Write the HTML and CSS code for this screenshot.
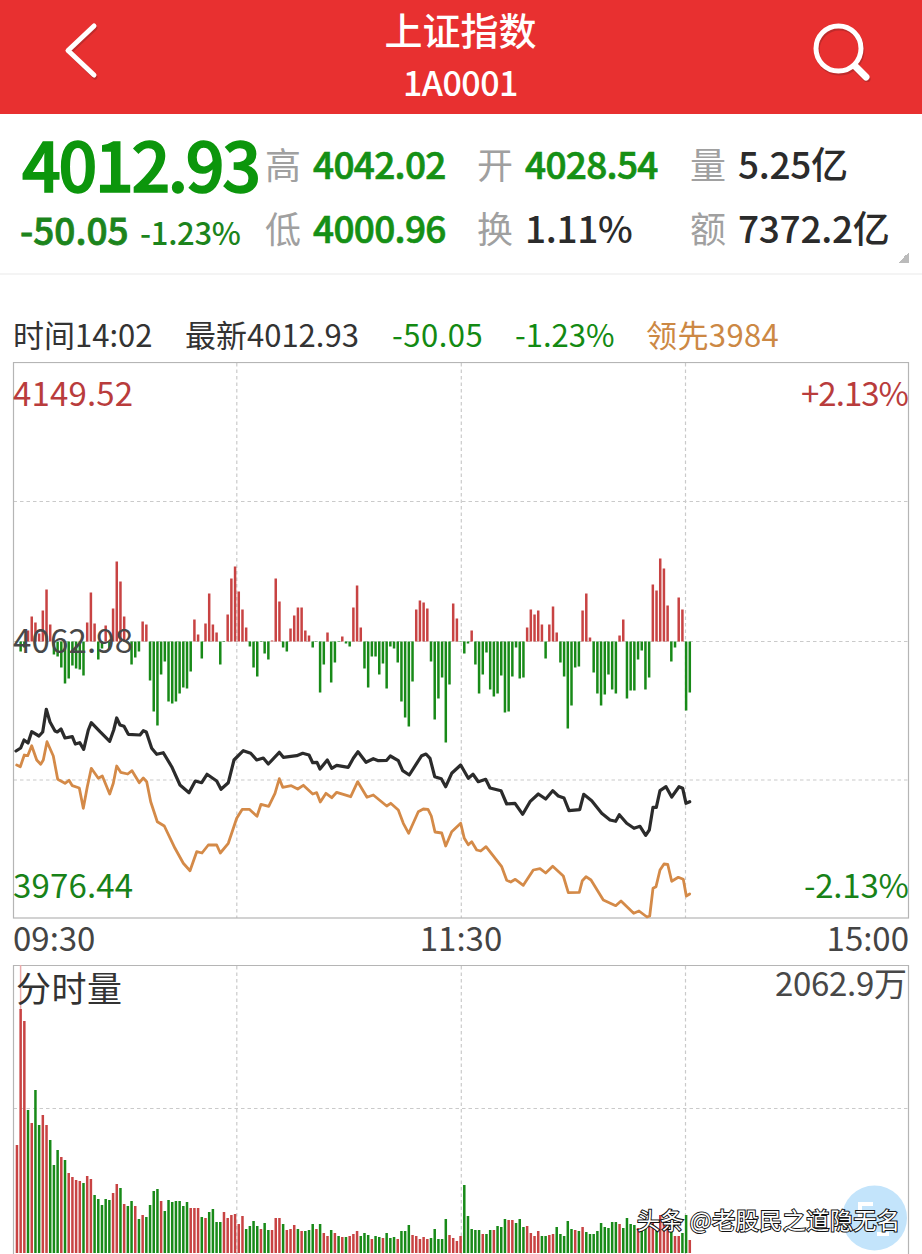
FILE: index.html
```html
<!DOCTYPE html>
<html lang="zh-CN">
<head>
<meta charset="utf-8">
<title>上证指数</title>
<link rel="stylesheet" href="styles.css">
</head>
<body>
<div class="app">
  <header class="topbar">
    <svg class="icon" width="60" height="70" viewBox="0 0 60 70"><path class="icon-shadow" d="M43 15 L17.500 39 L43 64" transform="translate(1 1)"/><path class="icon-line" d="M43 14 L17 38.500 L43 63"/></svg>
    <div class="heading"><h1 class="name">上证指数</h1><div class="code">1A0001</div></div>
    <svg class="icon" width="70" height="70" viewBox="0 0 70 70"><g class="icon-shadow" transform="translate(1 2)"><circle cx="33.500" cy="36.500" r="22.500"/><path class="handle" d="M51 55 L61 65"/></g><g class="icon-line"><circle cx="33.500" cy="36.500" r="22.500"/><path class="handle" d="M51 55 L61 65"/></g></svg>
  </header>

  <section class="quote">
    <div class="price">
      <div class="last">4012.93</div>
      <div class="change"><span class="diff">-50.05</span><span class="pct">-1.23%</span></div>
    </div>
    <dl class="stats">
      <div class="stat"><dt>高</dt><dd class="down">4042.02</dd></div>
      <div class="stat"><dt>开</dt><dd class="down">4028.54</dd></div>
      <div class="stat"><dt>量</dt><dd class="plain">5.25亿</dd></div>
      <div class="stat"><dt>低</dt><dd class="down">4000.96</dd></div>
      <div class="stat"><dt>换</dt><dd class="plain">1.11%</dd></div>
      <div class="stat"><dt>额</dt><dd class="plain">7372.2亿</dd></div>
    </dl>
    <i class="expand"></i>
  </section>

  <div class="ticker">
    <span class="t-time">时间14:02</span><span class="t-last">最新4012.93</span><span class="t-diff">-50.05</span><span class="t-pct">-1.23%</span><span class="t-lead">领先3984</span>
  </div>

  <svg class="chart" width="922" height="558" viewBox="0 362 922 558">
    <path class="grid" d="M13.500 501.500H908.500M13.500 641.500H908.500M13.500 780H908.500M236.800 363V918M461.300 363V918M685.500 363V918"/>
    <rect class="frame" x="13.500" y="362.500" width="895" height="555.500"/>
    <g id="momentum"></g>
    <polyline class="lead-line" points="16.700,765 20.300,766.700 24.300,755 27.700,755.700 31.700,745.700 36.700,760 40.700,764.300 43.300,760 47,741.700 53.300,756 57.700,779.300 65,783.300 69,780.300 72.300,785.700 79.300,788 83.300,808.300 87.300,786.700 91.300,768.300 98.300,778.300 102.300,776 109.700,794 113.300,783.300 116.700,766 120.700,772.300 127.700,774 132,770.700 139.300,782.700 143.300,778 146.700,781.700 150.700,801.700 157.300,821.700 164.300,826 175,848.300 183.300,863.300 190,870.700 196.700,851.700 202,853 208.300,845 216.700,845 220.300,853 228.300,843.300 236.700,818.300 242.300,809.300 249.300,809.300 257,816.300 261,804.300 268.700,806.300 275,793.300 279.300,778.700 282.700,787.300 291.300,785.700 297.700,789 303.300,785.300 312.700,794 316.700,792.700 320.300,802 326,793.300 331.700,797.700 336.700,792.300 350.700,796.700 357.700,781.700 367,797.300 373.300,795 386.700,806 390.700,803.300 398.300,810 403.300,823.300 408.700,833.300 418.300,811.700 423.300,809 428,809.300 431.300,816 435,832 441.700,833 445.700,846 451.700,831.700 460.700,823.300 464.300,838.300 468.300,844.700 471.700,841.700 476.700,850 480.700,851 486,846.700 501.700,866.700 506.700,880.300 510.700,882 515.300,879.300 523.300,885.300 533.300,870 540,868.700 545.700,873 552.700,866.300 563.300,876 568.300,892.700 579.300,892.300 582.300,880.700 586,876.700 591,880 603.300,900 615.700,905.700 621,901 633.700,913.300 639,911 647,917 649.700,916 653,888.300 656,886.700 660,870 664,864 667.700,864.300 671.700,881.300 678.300,877.300 683.300,879.300 686.300,896 689.700,894"/>
    <polyline class="price-line" points="16,751 20.700,748 24,740 28,743 31.700,731.700 39,736 42.700,732 46.300,709.300 50,722 55,731 57.300,732 61,729 65,738 72.300,736.700 75.300,744 79.700,742.700 83.700,749.300 88.300,730 91.300,722.700 100,731.700 109.700,741.300 113.700,730 116.700,718 120,725 124,726.300 128.300,734.300 140,735 143.300,730.700 146.300,732 151.700,748.300 156.700,754.300 163.300,752.700 171.700,766.700 180,785 189,792.700 195.300,781 201.700,782.700 207,774.300 216.700,781 221,789.300 228.300,782.700 234,760 243.300,750.700 250.700,753.300 256.700,760 263.300,758 268.300,764 279.300,752.300 283.300,757.300 296.700,755.700 302.700,753.300 309,755 312.700,762.700 317,762.300 320,769 327.300,760 331.700,768.300 336.700,765.300 348.300,767.300 353.300,758.300 358,751.700 366,762.300 373.300,758.700 378.300,760.700 386.700,760.300 390.300,756 398.300,760.700 402.700,770.700 409.300,775 416.700,763.300 421.700,755.700 426,754 430,758.300 434.700,776.700 441.300,778.700 445.700,786.700 451.700,773.300 460.700,765 468.300,778.300 473,774.300 478.300,781.700 485.700,779.300 490,788 501,790.700 506.700,804 515,803.300 522.700,814.300 530,801.700 538.300,794 545.700,799 552.700,790.700 558.300,796 564,798 569,810.700 579.700,809.700 583.700,794.300 591.700,800.700 601.700,813.300 610,820 615.700,821.300 619.300,814.700 626.700,823.300 634,828.300 640,826.300 645.700,835.300 649.300,830 653,807.300 656.300,807.300 660,790.700 666,786.700 671.700,797 679,786.700 682.700,788.300 686,803.300 689.700,801.700"/>
    <g class="axis">
      <text class="up" x="13" y="406" textLength="120">4149.52</text>
      <text class="up" x="801" y="406" textLength="108">+2.13%</text>
      <text class="mid" x="13" y="653" textLength="120">4062.98</text>
      <text class="low" x="13" y="898" textLength="120">3976.44</text>
      <text class="low" x="804" y="898" textLength="105">-2.13%</text>
    </g>
  </svg>

  <div class="times"><span>09:30</span><span>11:30</span><span>15:00</span></div>

  <svg class="chart volume" width="922" height="292" viewBox="0 962 922 292">
    <path class="grid" d="M13.500 1108.500H908.500M236.800 966V1254M461.300 966V1254M685.500 966V1254"/>
    <path class="frame" d="M13.500 1254V965.500H908.500V1254"/>
    <path class="peak" d="M20.600 965V1010"/>
    <g id="volume"></g>
    <g class="axis">
      <text class="vol-title" x="16" y="1002" textLength="106">分时量</text>
      <text class="mid" x="775" y="996" textLength="132">2062.9万</text>
    </g>
    <circle class="bubble" cx="874.500" cy="1218" r="32.500"/>
    <path class="bubble-mark" d="M860 1219V1204H873M860 1212H871M877 1234H889"/>
    <text class="watermark" x="637" y="1229" textLength="263">头条 @老股民之道隐无名</text>
  </svg>
</div>
<script src="chart.js"></script>
</body>
</html>
```
FILE: styles.css
```css
* { box-sizing: border-box; }
body { margin: 0; background: #fff; font-family: "Noto Sans CJK SC", "Noto Sans", sans-serif; color: #333; }
.app { width: 922px; height: 1254px; overflow: hidden; }
.topbar { height: 114px; background: #e83030; display: flex; justify-content: space-between; padding: 12px 47px 0 51px; }
.icon { fill: none; stroke-linecap: round; stroke-linejoin: round; }
.icon-line { stroke: #fff; stroke-width: 5; }
.icon-shadow { stroke: #a32828; stroke-width: 5; opacity: .6; }
.handle { stroke-width: 7; }
.heading { color: #fff; text-align: center; margin-top: -13px; margin-left: 5px; }
.name { margin: 0; font-size: 38px; line-height: 60px; font-weight: 500; }
.code { font-size: 34px; line-height: 46px; font-weight: 500; letter-spacing: -.5px; }

.quote { height: 161px; border-bottom: 2px solid #f4f4f4; display: flex; padding: 17px 0 0 20px; position: relative; }
.price { width: 245px; color: #0c960c; font-weight: 500; white-space: nowrap; }
.last { font-size: 68px; line-height: 64px; letter-spacing: -2.3px; -webkit-text-stroke: 1.6px currentColor; padding-left: 2px; }
.change { display: flex; align-items: baseline; line-height: 68px; color: #1c841c; }
.diff { font-size: 37px; width: 120px; -webkit-text-stroke: .8px currentColor; }
.pct { font-size: 31px; letter-spacing: -.3px; }
.stats { margin: 0; display: grid; grid-template-columns: 212px 213px 220px; grid-template-rows: 64px 64px; font-size: 37px; }
.stat { display: flex; gap: 12px; line-height: 64px; white-space: nowrap; }
.stat dt { color: #a0a0a0; font-size: 36px; font-weight: 400; }
.stat dd { margin: 0; font-weight: 500; }
.stat .down { color: #159015; letter-spacing: -.7px; -webkit-text-stroke: .7px currentColor; }
.stat .plain { color: #2b2b2b; letter-spacing: -.3px; }
.expand { position: absolute; right: 13px; bottom: 10px; background: linear-gradient(135deg, transparent 50%, #bbb 50%); width: 11px; height: 11px; }

.ticker { height: 87px; display: grid; grid-template-columns: 172px 207px 123px 131px 1fr; padding: 35px 0 0 13px; font-size: 31px; line-height: 48px; white-space: nowrap; }
.t-diff, .t-pct { color: #138a13; }
.t-diff { letter-spacing: .5px; }
.t-lead { color: #cc8844; letter-spacing: .4px; }

.chart { display: block; }
.grid { fill: none; stroke: #cacaca; stroke-width: 1.2; stroke-dasharray: 3.5 3; }
.frame { fill: none; stroke: #b5b5b5; stroke-width: 1.2; }
.price-line { fill: none; stroke: #2b2b2b; stroke-width: 3.2; stroke-linejoin: round; stroke-linecap: round; }
.lead-line { fill: none; stroke: #d48a48; stroke-width: 2.8; stroke-linejoin: round; stroke-linecap: round; }
.bar-up { fill: #c84343; }
.bar-down { fill: #188a18; }
.axis { font-size: 33px; }
.up { fill: #b93c3c; }
.low { fill: #188218; }
.mid { fill: #484848; }
.vol-title { fill: #333; font-size: 35px; }
.volume { overflow: visible; }
.peak { stroke: #ecaaaa; stroke-width: 1.5; }
.times { height: 42px; display: flex; justify-content: space-between; padding: 0 13px; font-size: 33px; line-height: 34px; color: #444; }
.bubble { fill: #c3e4fb; }
.bubble-mark { fill: none; stroke: #fff; stroke-width: 4; }
.watermark { font-size: 23px; fill: #fff; stroke: #111; stroke-width: 2; paint-order: stroke; }
```
FILE: chart.js
```js
const STEP = 3.697, FIRST = 16.95;
const momentum = [0,-10,-6,11,25,19,8,31,52,17,-13,-15,-26,-42,-37,-24,-27,-28,-34,19,49,18,-18,-7,16,-8,33,80,60,25,-2,-23,-16,-10,20,17,-39,-70,-84,-33,-20,-60,-62,-60,-52,-46,-47,-30,22,7,-17,18,48,17,9,-23,0,27,63,75,50,32,14,-5,-26,-35,0,-12,-18,1,63,40,-6,-10,13,26,34,34,11,6,-6,0,-51,-23,9,-41,-21,0,5,-2,-5,34,56,14,-27,-46,-15,-15,-33,-22,-47,-5,-7,-21,-60,-76,-85,-40,32,41,39,33,-20,-78,-57,-36,-101,-43,38,23,0,-12,-2,11,-23,-52,-33,-11,-48,-55,-52,-34,-71,-70,-35,-6,-37,-36,14,32,27,31,17,-17,17,35,9,-21,-35,-87,-64,-26,-25,31,48,4,-31,-52,-64,-53,-33,-48,-52,6,22,-57,-49,-49,-18,-9,-48,-36,57,51,83,73,36,-20,-6,44,32,-69,-51];
// Positive volume: rising minute; negative: falling minute.
const volume = [108,244,232,-143,130,-163,-128,138,128,-113,-88,-103,96,-93,80,76,73,72,-70,77,74,-58,-54,-48,-54,-53,60,69,-65,49,-47,-52,47,-34,38,-36,-48,-62,-64,52,-42,-53,-51,-52,-52,-47,-51,45,45,45,-36,35,-41,-44,-31,-31,41,35,38,39,29,37,-24,-27,-32,-27,24,-30,-23,23,35,35,-29,23,24,28,-24,22,-22,-23,-29,24,-29,20,17,-23,20,-17,16,-16,17,19,22,-17,-20,-18,14,-17,-16,15,-20,-15,-16,14,-22,-22,-28,18,17,14,16,14,-15,-24,-14,-14,-34,18,15,12,17,-68,-37,-24,-23,-23,19,-19,-23,23,-27,-26,-34,33,33,-30,-34,-26,27,20,17,22,-17,-17,18,19,-26,-19,-17,-32,-24,23,-22,26,-21,-19,-19,-22,-30,-26,-25,-31,-31,29,-25,-35,-29,-28,25,-22,-26,27,30,-24,38,30,26,-24,17,17,-20,-38,13];

function bar(group, i, y, height, rising) {
  const r = document.createElementNS("http://www.w3.org/2000/svg", "rect");
  r.setAttribute("x", (FIRST + i * STEP - 1.25).toFixed(2));
  r.setAttribute("y", y);
  r.setAttribute("width", 2.5);
  r.setAttribute("height", height);
  r.setAttribute("class", rising ? "bar-up" : "bar-down");
  group.appendChild(r);
}
const m = document.getElementById("momentum");
momentum.forEach((v, i) => bar(m, i, v > 0 ? 641.5 - v : 641.5, Math.max(Math.abs(v), 0.5), v > 0));
const g = document.getElementById("volume");
volume.forEach((v, i) => bar(g, i, 1253 - Math.abs(v), Math.abs(v), v > 0));
```
